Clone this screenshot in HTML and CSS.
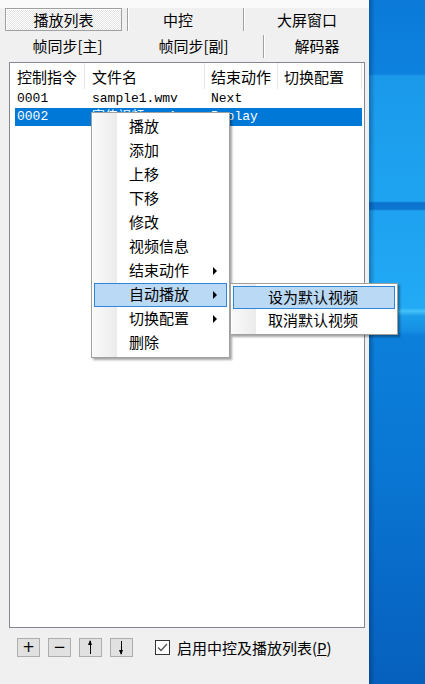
FILE: index.html
```html
<!DOCTYPE html>
<html lang="zh-CN">

<head>
    <meta charset="UTF-8">
    <meta name="viewport" content="width=device-width, initial-scale=1.0">
    <title>播放列表</title>
    <link rel="stylesheet" href="styles.css">
</head>

<body>
    <div class="screen">
        <div class="window">
            <div class="topStrip"></div>

            <div class="tabRow row1">
                <span class="tab active w117">播放列表</span>
                <span class="gap g5"></span>
                <span class="sep"></span>
                <span class="tab w98">中控</span>
                <span class="gap g14"></span>
                <span class="sep"></span>
                <span class="tab w124">大屏窗口</span>
            </div>
            <div class="tabRow row2">
                <span class="tab w125">帧同步[主]</span>
                <span class="tab w127">帧同步[副]</span>
                <span class="gap g6"></span>
                <span class="sep"></span>
                <span class="tab w104">解码器</span>
            </div>

            <div class="listBox">
                <div class="header">
                    <span class="col">控制指令</span>
                    <span class="col">文件名</span>
                    <span class="col">结束动作</span>
                    <span class="col">切换配置</span>
                </div>
                <div class="rows">
                    <div class="item">
                        <span>0001</span>
                        <span>sample1.wmv</span>
                        <span>Next</span>
                        <span></span>
                    </div>
                    <div class="item selected">
                        <span>0002</span>
                        <span>宣传视频.mp4</span>
                        <span>Replay</span>
                        <span></span>
                    </div>
                </div>
            </div>

            <div class="footer">
                <span class="btn">+</span>
                <span class="btn">&minus;</span>
                <span class="btn"><i class="arrow up"></i></span>
                <span class="btn"><i class="arrow down"></i></span>
                <label class="check">
                    <span class="box">
                        <svg width="13" height="13" viewBox="0 0 13 13">
                            <path d="M2 6.5 L5 9.5 L11 3" fill="none" stroke="#555" stroke-width="1.3"/>
                        </svg>
                    </span>
                    <span class="checkText">启用中控及播放列表(<u>P</u>)</span>
                </label>
            </div>
        </div>
        <div class="desktop"></div>
    </div>

    <!-- 右键菜单 -->
    <ul class="menu">
        <li>播放</li>
        <li>添加</li>
        <li>上移</li>
        <li>下移</li>
        <li>修改</li>
        <li>视频信息</li>
        <li class="sub">结束动作</li>
        <li class="sub hover">自动播放</li>
        <li class="sub">切换配置</li>
        <li>删除</li>
    </ul>
    <ul class="menu subMenu">
        <li class="hover">设为默认视频</li>
        <li>取消默认视频</li>
    </ul>
</body>

</html>
```

FILE: styles.css
```css
* {
    padding: 0;
    margin: 0;
    box-sizing: border-box;
}

body {
    width: 425px;
    height: 684px;
    overflow: hidden;
    font-family: "Noto Sans CJK SC", "Liberation Sans", sans-serif;
    font-size: 15px;
    color: #000;
}

.screen {
    display: flex;
    height: 684px;
}

.window {
    width: 369px;
    background: #f0f0f0;
    display: flex;
    flex-direction: column;
}

.topStrip {
    height: 8px;
    background: #fafafa;
}

.desktop {
    flex: 1;
    background:
        linear-gradient(to right, rgba(0, 30, 80, 0.35), rgba(0, 30, 80, 0) 6px),
        linear-gradient(to bottom,
            #0b7ad9 0px, #0d82de 74px,
            #1b99ea 76px, #1ea4f1 201px,
            #0c72cf 203px, #0d74d0 209px,
            #1ea2f1 211px, #22aaf5 308px,
            #46c3fa 311px, #1b9deb 316px,
            #1590e4 330px, #0c7fdb 336px,
            #0a78d5 450px, #0868c6 600px, #0660bd 684px);
}

/* 选项卡 */
.tabRow {
    display: flex;
    align-items: center;
    padding-left: 5px;
}

.row1 {
    height: 23px;
}

.row2 {
    height: 25px;
    margin-top: 2px;
}

.tab {
    display: flex;
    align-items: center;
    justify-content: center;
    height: 100%;
    line-height: 1;
    white-space: nowrap;
}

.tab.active {
    border: 1px solid #a0a0a0;
    box-shadow: inset 1px 1px 0 #fff;
    background-color: #fff;
    background-image: repeating-conic-gradient(#fff 0 25%, #e4e4e4 0 50%);
    background-size: 2px 2px;
}

.w98 { width: 98px; }
.w104 { width: 104px; }
.w117 { width: 117px; }
.w124 { width: 124px; }
.w125 { width: 125px; }
.w127 { width: 127px; }

.gap { height: 100%; }
.g5 { width: 5px; }
.g6 { width: 6px; }
.g14 { width: 16px; }

.sep {
    width: 2px;
    height: 100%;
    border-left: 1px solid #a0a0a0;
    border-right: 1px solid #fff;
}

.row2 .sep {
    height: 23px;
    align-self: flex-end;
}

/* 列表 */
.listBox {
    margin: 4px 4px 0 9px;
    height: 566px;
    background: #fff;
    border: 1px solid #828790;
}

.header {
    display: grid;
    grid-template-columns: 75px 120px 73px 84px;
    height: 26px;
}

.header .col {
    display: flex;
    align-items: center;
    padding-left: 7px;
    border-right: 1px solid #e5e5e5;
    white-space: nowrap;
    line-height: 1;
}

.header .col:nth-child(3),
.header .col:nth-child(4) {
    padding-left: 6px;
}

.rows {
    padding-top: 1px;
}

.item {
    display: grid;
    grid-template-columns: 70px 120px 73px 84px;
    height: 18px;
    margin-left: 5px;
    width: 347px;
    font-family: "Liberation Mono", "Noto Sans CJK SC", monospace;
    font-size: 13px;
    line-height: 18px;
}

.item span {
    padding-left: 7px;
    white-space: nowrap;
    overflow: hidden;
}

.item span:first-child {
    padding-left: 2px;
}

.item span:nth-child(3) {
    padding-left: 6px;
}

.item.selected {
    background: #0078d7;
    color: #fff;
}

/* 底部按钮 */
.footer {
    display: flex;
    align-items: center;
    height: 19px;
    margin-top: 10px;
    padding-left: 17px;
}

.btn {
    display: flex;
    align-items: center;
    justify-content: center;
    width: 23px;
    height: 19px;
    margin-right: 8px;
    background: #e1e1e1;
    border: 1px solid #adadad;
    font-family: "DejaVu Sans", sans-serif;
    font-size: 15px;
    line-height: 1;
}

.arrow {
    position: relative;
    display: block;
    width: 1px;
    height: 13px;
    background: #000;
}

.arrow::before {
    content: "";
    position: absolute;
    left: -2px;
    border-left: 2.5px solid transparent;
    border-right: 2.5px solid transparent;
}

.arrow.up::before {
    top: -1px;
    border-bottom: 5px solid #000;
}

.arrow.down::before {
    bottom: -1px;
    border-top: 5px solid #000;
}

.check {
    display: flex;
    align-items: center;
    margin-left: 14px;
}

.box {
    display: flex;
    align-items: center;
    justify-content: center;
    width: 15px;
    height: 15px;
    border: 1px solid #333;
    background: #fff;
}

.checkText {
    margin-left: 7px;
    line-height: 1;
    white-space: nowrap;
}

.checkText u {
    text-underline-offset: 1px;
}

/* 右键菜单 */
.menu {
    position: absolute;
    left: 91px;
    top: 112px;
    width: 139px;
    padding: 2px;
    list-style: none;
    background:
        linear-gradient(to right, #fafafa, #ebebeb) 1px 0 / 24px 100% no-repeat,
        #fff;
    border: 1px solid #a0a0a0;
    box-shadow: 2px 2px 2px rgba(0, 0, 0, 0.35);
}

.menu li {
    position: relative;
    height: 24px;
    line-height: 20px;
    padding-left: 34px;
    border: 1px solid transparent;
    white-space: nowrap;
}

.menu li.hover {
    background: #bad9f5;
    border-color: #2f86d9;
}

.menu li.sub::after {
    content: "";
    position: absolute;
    right: 9px;
    top: 7px;
    border-top: 4px solid transparent;
    border-bottom: 4px solid transparent;
    border-left: 4px solid #000;
}

.subMenu {
    left: 230px;
    top: 283px;
    width: 168px;
}

.subMenu li {
    height: 23px;
    line-height: 20px;
}
```
